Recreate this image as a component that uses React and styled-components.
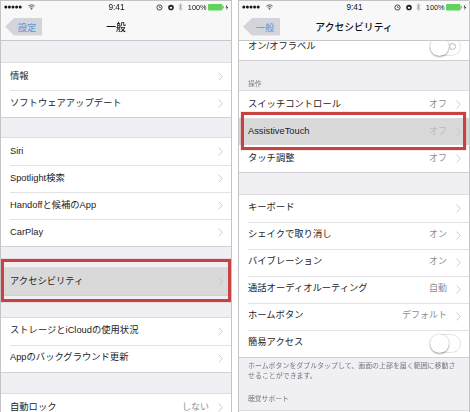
import React from "react";
import styled, { createGlobalStyle } from "styled-components";

const GlobalStyle = createGlobalStyle`
  html, body { margin: 0; padding: 0; background: #fff; }
  body { font-family: "Liberation Sans", "Noto Sans CJK JP", sans-serif; }
`;

const generalSections = [
  { gap: 21.5, rows: [{ label: "情報" }, { label: "ソフトウェアアップデート" }] },
  {
    gap: 19,
    rows: [
      { label: "Siri" },
      { label: "Spotlight検索" },
      { label: "Handoffと候補のApp" },
      { label: "CarPlay" },
    ],
  },
  { gap: 20, rows: [{ label: "アクセシビリティ", selected: true, frame: "wide" }] },
  { gap: 20.5, rows: [{ label: "ストレージとiCloudの使用状況" }, { label: "Appのバックグラウンド更新" }] },
  { gap: 20.5, rows: [{ label: "自動ロック", value: "しない" }] },
];

const accessibilitySections = [
  { gap: -8, rows: [{ label: "オン/オフラベル", toggle: true, labelled: true, plain: true }] },
  {
    title: "操作",
    rows: [
      { label: "スイッチコントロール", value: "オフ" },
      { label: "AssistiveTouch", value: "オフ", selected: true, frame: "tight" },
      { label: "タッチ調整", value: "オフ" },
    ],
  },
  {
    gap: 20.5,
    rows: [
      { label: "キーボード" },
      { label: "シェイクで取り消し", value: "オン" },
      { label: "バイブレーション", value: "オン" },
      { label: "通話オーディオルーティング", value: "自動" },
      { label: "ホームボタン", value: "デフォルト" },
      { label: "簡易アクセス", toggle: true },
    ],
    note: "ホームボタンをダブルタップして、画面の上部を届く範囲に移動させることができます。",
  },
  { title: "聴覚サポート", rows: [{ label: "", empty: true }] },
];

const Page = styled.div`
  display: flex;
  gap: 6px;
  width: 470px;
  height: 412px;
  overflow: hidden;
  filter: blur(0.4px);
`;

const Phone = styled.div`
  width: 232px;
  height: 412px;
  box-sizing: border-box;
  border: 1px solid #c4c4c6;
  border-bottom: 0;
  background: #efeff4;
  overflow: hidden;
  display: flex;
  flex-direction: column;
`;

const Header = styled.div`
  position: relative;
  z-index: 2;
  flex: none;
  height: 39.5px;
  box-sizing: border-box;
  background: #f8f8f9;
  border-bottom: 1px solid #c8c7cc;
`;

const StatusBar = styled.div`
  height: 12px;
  padding: 0 2px 0 3px;
  display: grid;
  grid-template-columns: 1fr auto 1fr;
  align-items: center;
  font-size: 7.3px;
  color: #111;
`;

const StatusGroup = styled.div`
  display: flex;
  align-items: center;
  justify-content: ${(p) => (p.$end ? "flex-end" : "flex-start")};
  gap: ${(p) => (p.$end ? "4.5px" : "6px")};
`;

const Time = styled.span`
  font-size: 8.3px;
`;

const Percent = styled.span`
  margin-right: -3px;
`;

const NavBar = styled.div`
  height: 27px;
  display: flex;
  align-items: center;
  justify-content: center;
  position: relative;
`;

const NavTitle = styled.div`
  font-size: 9.8px;
  font-weight: 500;
  font-family: "Noto Sans CJK JP", sans-serif;
  color: #111;
`;

/* the grey callout that the source image painted over the back button */
const BackButton = styled.div`
  position: absolute;
  left: 4px;
  top: 5px;
  width: 37px;
  height: 17.5px;
  padding-left: 7px;
  box-sizing: border-box;
  display: flex;
  align-items: center;
  justify-content: center;
  background: #d4d5da;
  clip-path: polygon(0 50%, 9px 0, 100% 0, 100% 100%, 9px 100%);
  color: #5b93d6;
  font-size: 9.3px;
`;

const Scroller = styled.div`
  flex: 1;
  min-height: 0;
`;

const SectionTitle = styled.div`
  padding: ${(p) => (p.$first ? "18px 9px 1.5px" : "12.5px 9px 6px")};
  font-size: 6.8px;
  line-height: 10px;
  color: #77777c;
`;

const RowGroup = styled.div`
  margin-top: ${(p) => p.$gap || 0}px;
  background: #fff;
  border-top: ${(p) => (p.$plain ? "0" : "1px solid #dcdce0")};
  border-bottom: 1px solid #d0d0d4;
`;

const Row = styled.div`
  position: relative;
  height: 27px;
  box-sizing: border-box;
  padding: 0 8px 0 9px;
  display: flex;
  align-items: center;
  justify-content: space-between;
  background: ${(p) => (p.$selected ? "#d9d9d9" : "#fff")};
  font-size: 9.3px;
  color: #1c1c1e;

  & + &::before {
    content: "";
    position: absolute;
    top: 0;
    left: 9px;
    right: 0;
    border-top: 1px solid #e2e2e5;
  }
`;

const Label = styled.span`
  line-height: 12px;
  margin-bottom: ${(p) => (p.$plain ? "0" : "2px")};
`;

const RowEnd = styled.div`
  display: flex;
  align-items: center;
  gap: 9px;
  color: ${(p) => (p.$selected ? "#bbbbbd" : "#8e8e93")};
`;

const Value = styled.span`
  font-size: 9px;
  line-height: 12px;
  margin-bottom: 2px;
`;

const Frame = styled.div`
  position: absolute;
  z-index: 1;
  box-sizing: border-box;
  left: ${(p) => (p.$kind === "wide" ? "0" : "2px")};
  right: ${(p) => (p.$kind === "wide" ? "0" : "3px")};
  top: ${(p) => (p.$kind === "wide" ? "-9px" : "-6px")};
  bottom: ${(p) => (p.$kind === "wide" ? "-7px" : "-5px")};
  border: 3.5px solid #c8423f;
  box-shadow: 0 0 1px rgba(150, 40, 40, 0.6);
`;

const Toggle = styled.div`
  position: relative;
  width: 31.5px;
  height: 19px;
  box-sizing: border-box;
  border: 1px solid #e4e4e8;
  border-radius: 10px;
  background: #fff;
`;

const Knob = styled.div`
  position: absolute;
  left: -1px;
  top: -1px;
  width: 19px;
  height: 19px;
  border-radius: 50%;
  background: #fff;
  box-shadow: 0 1px 2px rgba(0, 0, 0, 0.35), 0 0 1px rgba(0, 0, 0, 0.25);
`;

const OffMark = styled.div`
  position: absolute;
  right: 4px;
  top: 5px;
  width: 5px;
  height: 5px;
  border: 0.7px solid #b5b5b8;
  border-radius: 50%;
`;

const Note = styled.div`
  padding: 3px 9px 0.5px;
  font-size: 6.95px;
  line-height: 10.2px;
  color: #77777c;
`;

const Chevron = ({ faded }) => (
  <svg width="5" height="9" viewBox="0 0 5 9" fill="none">
    <path d="M0.6 0.6 L4.3 4.5 L0.6 8.4" stroke={faded ? "#c4c4c6" : "#c7c7cc"} strokeWidth="0.9" />
  </svg>
);

const Wifi = () => (
  <svg width="7" height="6" viewBox="0 0 9 7" fill="none" stroke="#222" strokeWidth="0.9">
    <path d="M0.5 2.4 C2.8 0.2 6.2 0.2 8.5 2.4" />
    <path d="M1.9 3.9 C3.4 2.6 5.6 2.6 7.1 3.9" />
    <path d="M3.3 5.3 C4 4.8 5 4.8 5.7 5.3" />
    <circle cx="4.5" cy="6.2" r="0.3" fill="#222" />
  </svg>
);

const Dots = () => (
  <svg width="18" height="4" viewBox="0 0 18 4" fill="#1a1a1a">
    {[1.8, 5.4, 9, 12.6, 16.2].map((x) => (
      <circle key={x} cx={x} cy="2" r="1.5" />
    ))}
  </svg>
);

const Alarm = () => (
  <svg width="7" height="7" viewBox="0 0 7 7" fill="none" stroke="#333" strokeWidth="0.9">
    <circle cx="3.5" cy="3.5" r="2.6" />
    <path d="M3.5 2 V3.6 H5" strokeWidth="0.6" />
  </svg>
);

const RotationLock = () => (
  <svg width="6" height="7" viewBox="0 0 7 7">
    <circle cx="3.5" cy="3.5" r="3.3" fill="#222" />
    <rect x="2.2" y="2.8" width="2.6" height="2" fill="#fff" />
  </svg>
);

const Bluetooth = () => (
  <svg width="5" height="8" viewBox="0 0 5 8" fill="none" stroke="#888" strokeWidth="0.6">
    <path d="M0.5 2 L4 5.5 L2.4 7.3 V0.7 L4 2.5 L0.5 6" />
  </svg>
);

const Battery = () => (
  <svg width="21" height="7" viewBox="0 0 21 7">
    <rect x="0" y="0" width="14.5" height="6.5" rx="1" fill="#5fd35a" />
    <rect x="14.7" y="2" width="1" height="2.5" fill="#888" />
    <path d="M19.2 0.5 L17.6 3.6 H18.9 L18.3 6.3 L20.2 2.9 H18.9 Z" fill="#222" />
  </svg>
);

const Status = () => (
  <StatusBar>
    <StatusGroup>
      <Dots />
      <Wifi />
    </StatusGroup>
    <Time>9:41</Time>
    <StatusGroup $end>
      <Alarm />
      <RotationLock />
      <Bluetooth />
      <Percent>100%</Percent>
      <Battery />
    </StatusGroup>
  </StatusBar>
);

const SettingRow = ({ row }) => (
  <Row $selected={row.selected}>
    {row.frame && <Frame $kind={row.frame} />}
    <Label $plain={row.plain}>{row.label}</Label>
    {row.toggle ? (
      <Toggle>
        <Knob />
        {row.labelled && <OffMark />}
      </Toggle>
    ) : row.empty ? null : (
      <RowEnd $selected={row.selected}>
        {row.value && <Value>{row.value}</Value>}
        <Chevron faded={row.selected} />
      </RowEnd>
    )}
  </Row>
);

const Screen = ({ back, title, sections }) => (
  <Phone>
    <Header>
      <Status />
      <NavBar>
        <BackButton>{back}</BackButton>
        <NavTitle>{title}</NavTitle>
      </NavBar>
    </Header>
    <Scroller>
      {sections.map((section, i) => (
        <div key={i}>
          {section.title && <SectionTitle $first={i === 1}>{section.title}</SectionTitle>}
          <RowGroup $gap={section.gap} $plain={section.rows[0].plain}>
            {section.rows.map((row) => (
              <SettingRow key={row.label} row={row} />
            ))}
          </RowGroup>
          {section.note && <Note>{section.note}</Note>}
        </div>
      ))}
    </Scroller>
  </Phone>
);

export default function App() {
  return (
    <>
      <GlobalStyle />
      <Page>
        <Screen back="設定" title="一般" sections={generalSections} />
        <Screen back="一般" title="アクセシビリティ" sections={accessibilitySections} />
      </Page>
    </>
  );
}
